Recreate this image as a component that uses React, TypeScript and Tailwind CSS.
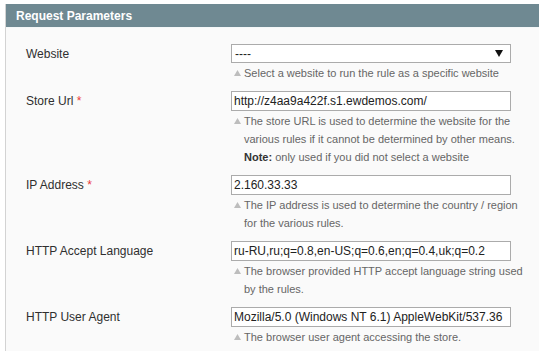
import React from "react";

const font = { fontFamily: '"Liberation Sans", Arial, sans-serif' };

function Hint({ children }: { children: React.ReactNode }) {
  return (
    <div className="relative mt-px w-[300px] pl-[13px] text-[11px] leading-[18px] text-[#666] whitespace-nowrap">
      <svg className="absolute left-[3px] top-[6px]" width="7" height="6" viewBox="0 0 7 6">
        <path d="M3.5 0 L7 6 L0 6 Z" fill="#bdbdbd" />
      </svg>
      {children}
    </div>
  );
}

function Row({
  label,
  required,
  children,
}: {
  label: string;
  required?: boolean;
  children: React.ReactNode;
}) {
  return (
    <div className="flex mb-[9px]">
      <div className="w-[205px] shrink-0 text-[12px] leading-[20px] text-[#2f2f2f]">
        {label}
        {required && <span className="text-[#eb3b3b]"> *</span>}
      </div>
      <div className="w-[280px]">{children}</div>
    </div>
  );
}

function Field({ value }: { value: string }) {
  return (
    <div className="h-[20px] w-[280px] border border-[#ababab] bg-white pl-[2px] text-[12px] leading-[18px] text-[#222] whitespace-nowrap overflow-hidden">
      {value}
    </div>
  );
}

export default function App() {
  return (
    <div className="w-[539px] h-[351px] bg-white pt-[4px] pl-[5px] overflow-hidden" style={font}>
      <div className="h-full border-l border-[#d3d3d3] bg-[#fafafa]">
        <div className="h-[23px] bg-[#6f8992] pl-[10px] flex items-center text-[12px] font-bold text-white">
          Request Parameters
        </div>
        <div className="h-px bg-[#f4f7f8]" />
        <div className="pt-[16px] pl-[20px]">
          <Row label="Website">
            <div className="h-[19px] w-[280px] border border-[#ababab] bg-white flex items-center justify-between pl-[3px] pr-[7px] text-[12px] text-[#222]">
              <span>----</span>
              <svg width="8" height="7" viewBox="0 0 8 7">
                <path d="M0 0 L8 0 L4 7 Z" fill="#111" />
              </svg>
            </div>
            <Hint>Select a website to run the rule as a specific website</Hint>
          </Row>
          <Row label="Store Url" required>
            <Field value="http://z4aa9a422f.s1.ewdemos.com/" />
            <Hint>
              The store URL is used to determine the website for the
              <br />
              various rules if it cannot be determined by other means.
              <br />
              <span className="font-bold text-[#333]">Note:</span> only used if you did not select a
              website
            </Hint>
          </Row>
          <Row label="IP Address" required>
            <Field value="2.160.33.33" />
            <Hint>
              The IP address is used to determine the country / region
              <br />
              for the various rules.
            </Hint>
          </Row>
          <Row label="HTTP Accept Language">
            <Field value="ru-RU,ru;q=0.8,en-US;q=0.6,en;q=0.4,uk;q=0.2" />
            <Hint>
              The browser provided HTTP accept language string used
              <br />
              by the rules.
            </Hint>
          </Row>
          <Row label="HTTP User Agent">
            <Field value="Mozilla/5.0 (Windows NT 6.1) AppleWebKit/537.36" />
            <Hint>The browser user agent accessing the store.</Hint>
          </Row>
        </div>
      </div>
    </div>
  );
}
